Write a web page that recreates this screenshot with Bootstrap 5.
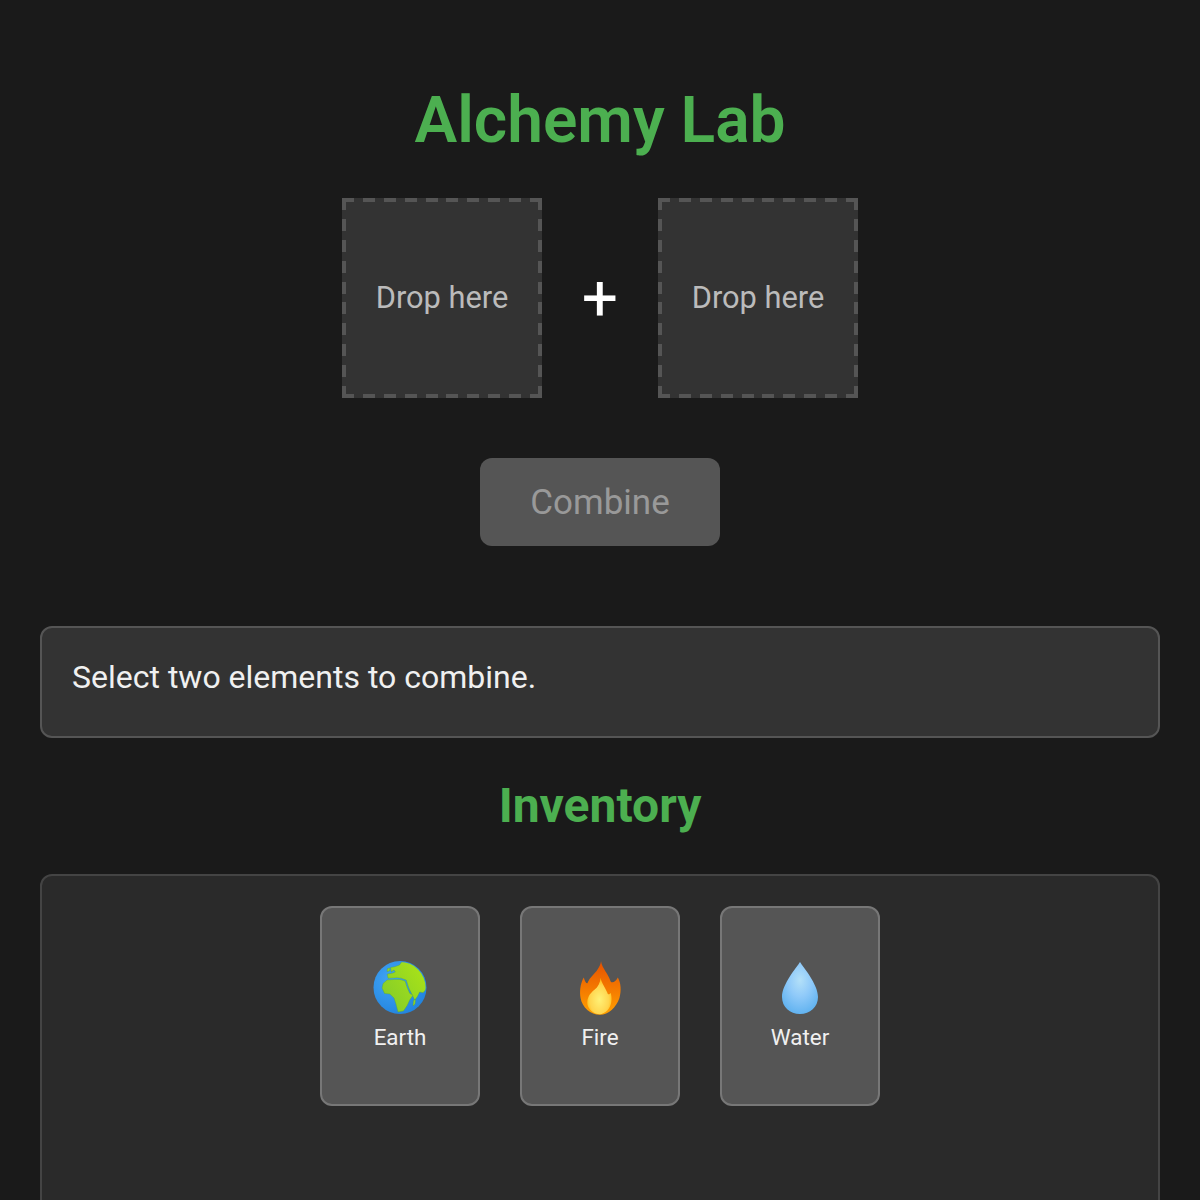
<!DOCTYPE html>
<html lang="en">
<head>
<meta charset="utf-8">
<title>Alchemy Lab</title>
<link rel="stylesheet" href="https://cdn.jsdelivr.net/npm/bootstrap@5.3.0/dist/css/bootstrap.min.css">
<style>
html,body{height:100%;overflow:hidden}
body{background:#1a1a1a;color:#f0f0f0;font-family:Roboto,"Noto Sans",sans-serif;padding:40px;}
.lab-title{color:#4caf50;font-size:64px;font-weight:640;line-height:75px;margin:43px 0 40px;}
.slot{width:200px;height:200px;background-color:#333;color:#bbb;font-size:30.8px;
background-image:
repeating-linear-gradient(90deg,#555 0 12px,transparent 12px 20.89px),
repeating-linear-gradient(90deg,#555 0 12px,transparent 12px 20.89px),
repeating-linear-gradient(180deg,#555 0 12px,transparent 12px 20.89px),
repeating-linear-gradient(180deg,#555 0 12px,transparent 12px 20.89px);
background-size:100% 4px,100% 4px,4px 100%,4px 100%;
background-position:0 0,0 100%,0 0,100% 0;
background-repeat:no-repeat;}
.plus-sign{width:116px;font-size:64px;line-height:1;color:#fff;padding-top:2px;}
.btn.combine-btn,.btn.combine-btn:disabled{width:240px;height:88px;background:#555;border:0;border-radius:12px;color:#999;font-size:35px;margin:60px 0 80px;opacity:1;padding:2px 0 0;}
.msg-box{background:#333;border:2px solid #555;border-radius:12px;height:112px;padding:30px;font-size:32px;line-height:38px;}
.inv-title{color:#4caf50;font-size:48px;font-weight:660;line-height:56px;margin:40px 0;}
.inv-box{background:#2a2a2a;border:2px solid #444;border-radius:12px;padding:30px;height:500px;gap:40px;}
.elem{width:160px;height:200px;background:#555;border:2px solid #777;border-radius:12px;font-size:22.4px;line-height:26px;}
.elem-svg{width:56px;height:56px;margin-bottom:8px;}
.elem-name{margin-bottom:3px;}
</style>
</head>
<body>
<h1 class="lab-title text-center">Alchemy Lab</h1>
<div class="d-flex justify-content-center align-items-center">
<div class="slot d-flex align-items-center justify-content-center">Drop here</div>
<div class="plus-sign text-center">+</div>
<div class="slot d-flex align-items-center justify-content-center">Drop here</div>
</div>
<div class="d-flex justify-content-center"><button class="btn combine-btn" disabled>Combine</button></div>
<div class="msg-box">Select two elements to combine.</div>
<h2 class="inv-title text-center">Inventory</h2>
<div class="inv-box d-flex justify-content-center align-items-start">
<div class="elem d-flex flex-column align-items-center justify-content-center">
<svg class="elem-svg" viewBox="0 0 56 56" role="img" aria-label="🌍">
<defs>
<linearGradient id="gl" gradientUnits="userSpaceOnUse" x1="10" y1="40" x2="52" y2="12"><stop offset="0" stop-color="#84cc2a"/><stop offset="1" stop-color="#a8e218"/></linearGradient>
<radialGradient id="oc" cx="0.35" cy="0.35" r="0.8"><stop offset="0" stop-color="#42a5f5"/><stop offset="1" stop-color="#1e80dc"/></radialGradient>
<clipPath id="gc"><circle cx="28" cy="27.5" r="25.6"/></clipPath>
</defs>
<circle cx="28" cy="27.5" r="26.5" fill="url(#oc)"/>
<g clip-path="url(#gc)" fill="url(#gl)" stroke="#4f9e3c" stroke-width=".35">
<path d="M18.5 7.5L22.7 6.7 27.5 5 31 0H60V27.7L55.3 28 51 32.7 47.7 32 45.3 36.7 42.7 40 39.3 33 36.7 27.7 34.2 20 29 18.2 25 17.8 22.7 18 16 18.3 15.2 14 20 13.3 23.3 12 22 10 19.3 12Z"/>
<path d="M10 28L11 23.5 15 20 22.7 19.4 28 19.5 33 21 35.3 27.7 37.7 33.3 41 35.3 37.7 40 35.3 45.3 31.5 51 26 52 24 44.3 22 38 17.7 34 12.5 33.5Z"/>
<path d="M41.5 40.5L43.5 39.5 43 44 41 46Z"/>
<path d="M15.5 8.5L18 8 17.5 11 15 11.5Z"/>
</g>
</svg>
<div class="elem-name">Earth</div></div>
<div class="elem d-flex flex-column align-items-center justify-content-center">
<svg class="elem-svg" viewBox="0 0 56 56" role="img" aria-label="🔥">
<defs>
<linearGradient id="fo" x1="0.5" y1="0" x2="0.5" y2="1"><stop offset="0" stop-color="#e65100"/><stop offset=".55" stop-color="#f57c00"/><stop offset="1" stop-color="#ffa000"/></linearGradient>
<radialGradient id="fi" cx="0.5" cy="0.6" r="0.6"><stop offset="0" stop-color="#fff176"/><stop offset=".65" stop-color="#ffd54f"/><stop offset="1" stop-color="#ffb300"/></radialGradient>
</defs>
<g transform="translate(28 28) scale(1.05) translate(-28 -28.5)">
<path d="M29 3C30 10 36 15 38 22C39.5 24.5 43 22.5 45 18.5C48 24 48.5 31 46.5 38C43.5 47 36 54 28 54C19 54 11 47 9.5 38C8.5 32 9 25 12.5 18.5C13.5 22 15 24.5 16 24C18 18 24 14 25.5 11C27.5 8 28.5 6 29 3Z" fill="url(#fo)"/>
<path d="M28.7 18.7C29 23 32 26 35 33C35.5 35 37 35 38 33C40 38 39 46 35 50C33 52 30 53.5 28 53.5C22 53.5 17 49 16 44C15.5 38 18 34 23 30C26 27.5 28 24 28.7 18.7Z" fill="url(#fi)"/>
</g>
</svg>
<div class="elem-name">Fire</div></div>
<div class="elem d-flex flex-column align-items-center justify-content-center">
<svg class="elem-svg" viewBox="0 0 56 56" role="img" aria-label="💧">
<defs>
<radialGradient id="wd" cx="0.5" cy="0.35" r="0.7"><stop offset="0" stop-color="#b3e0f8"/><stop offset=".45" stop-color="#90caf9"/><stop offset="1" stop-color="#5cb0ef"/></radialGradient>
</defs>
<path d="M28 2c3 5 18 22 18 35 0 10-8 17-18 17s-18-7-18-17C10 24 25 7 28 2z" fill="url(#wd)"/>
</svg>
<div class="elem-name">Water</div></div>
</div>
<script src="https://cdn.jsdelivr.net/npm/bootstrap@5.3.0/dist/js/bootstrap.bundle.min.js"></script>
</body>
</html>
